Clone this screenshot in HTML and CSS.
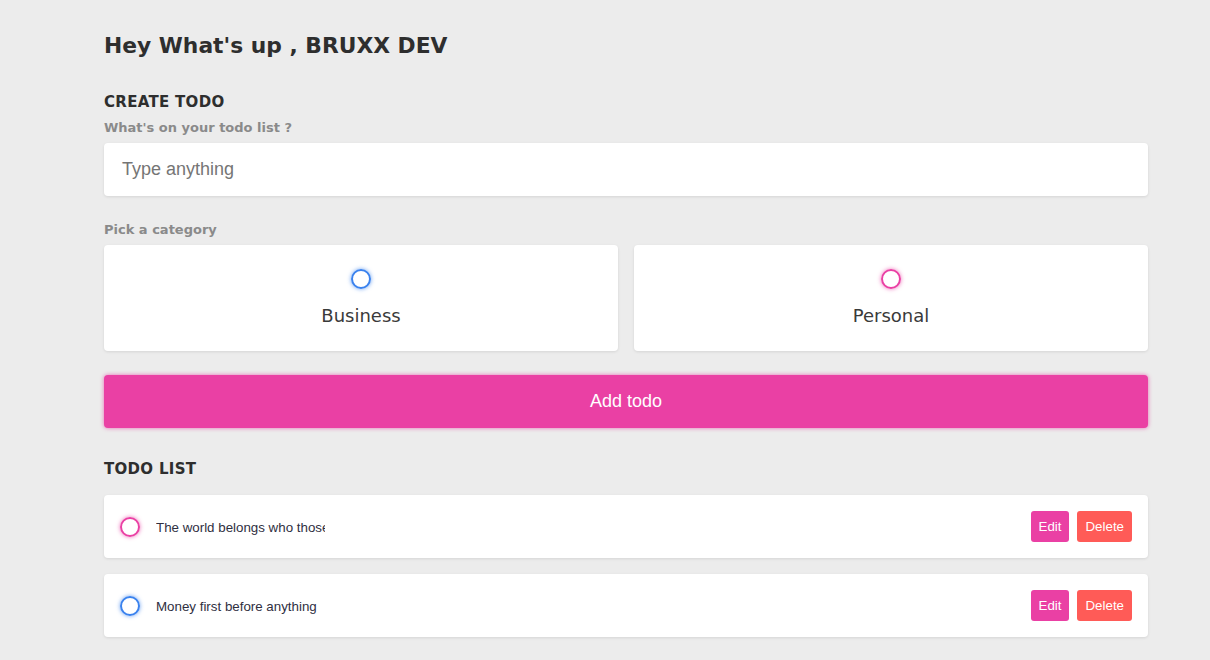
FILE: index.html
```html
<!DOCTYPE html>
<html lang="en">
<head>
<meta charset="utf-8">
<title>Todo</title>
<link rel="stylesheet" href="styles.css">
</head>
<body>
<main class="app">
  <section class="greeting">
    <h2 class="title">Hey What's up , <span class="name">BRUXX DEV</span></h2>
  </section>

  <section class="create-todo">
    <h3>CREATE TODO</h3>
    <h4>What's on your todo list ?</h4>
    <div class="text-input">Type anything</div>

    <h4>Pick a category</h4>
    <div class="options">
      <div class="option">
        <span class="bubble business"></span>
        <div class="option-label">Business</div>
      </div>
      <div class="option">
        <span class="bubble personal"></span>
        <div class="option-label">Personal</div>
      </div>
    </div>

    <div class="submit">Add todo</div>
  </section>

  <section class="todo-list">
    <h3>TODO LIST</h3>
    <div class="list">
      <div class="todo-item">
        <span class="bubble personal"></span>
        <div class="todo-content"><span class="todo-text">The world belongs who those who wake up early</span></div>
        <div class="actions">
          <span class="btn edit">Edit</span>
          <span class="btn delete">Delete</span>
        </div>
      </div>
      <div class="todo-item">
        <span class="bubble business"></span>
        <div class="todo-content"><span class="todo-text">Money first before anything</span></div>
        <div class="actions">
          <span class="btn edit">Edit</span>
          <span class="btn delete">Delete</span>
        </div>
      </div>
    </div>
  </section>
</main>
</body>
</html>
```

FILE: styles.css
```css
* {
  margin: 0;
  padding: 0;
  box-sizing: border-box;
}

body {
  background: #ececec;
  color: #333333;
  font-family: "DejaVu Sans", sans-serif;
}

.app {
  width: 1148px;
  padding: 32px 0 0 104px;
}

.title {
  font-size: 21.8px;
  line-height: 28px;
  font-weight: 700;
  color: #2e2e2e;
}

.create-todo {
  margin-top: 32px;
}

h3 {
  font-size: 15px;
  line-height: 20px;
  font-weight: 700;
  letter-spacing: 0.3px;
  color: #2e2e2e;
  margin-bottom: 6px;
}

h4 {
  font-size: 13px;
  line-height: 19px;
  font-weight: 700;
  color: #8a8a8a;
  margin-bottom: 6px;
}

.text-input {
  height: 53px;
  display: flex;
  align-items: center;
  padding: 0 18px;
  background: #fff;
  border-radius: 4px;
  box-shadow: 0 1px 3px rgba(0, 0, 0, 0.1);
  font-family: "Liberation Sans", Arial, sans-serif;
  font-size: 18px;
  color: #757575;
  margin-bottom: 24px;
}

.options {
  display: grid;
  grid-template-columns: 1fr 1fr;
  gap: 16px;
  margin-bottom: 24px;
}

.option {
  display: flex;
  flex-direction: column;
  align-items: center;
  padding: 24px;
  background: #fff;
  border-radius: 4px;
  box-shadow: 0 1px 3px rgba(0, 0, 0, 0.1);
}

.option-label {
  margin-top: 16px;
  font-size: 18px;
  line-height: 22px;
  font-weight: 400;
  color: #3a3a3a;
}

.bubble {
  display: block;
  flex: none;
  width: 20px;
  height: 20px;
  border-radius: 50%;
  border: 2px solid #3a82ee;
  box-shadow: 0 0 4px rgba(58, 130, 238, 0.75);
}

.bubble.personal {
  border-color: #ea40a4;
  box-shadow: 0 0 4px rgba(234, 64, 164, 0.75);
}

.submit {
  height: 53px;
  display: flex;
  align-items: center;
  justify-content: center;
  background: #ea40a4;
  border-radius: 4px;
  box-shadow: 0 0 4px rgba(234, 64, 164, 0.75);
  color: #fff;
  font-family: "Liberation Sans", Arial, sans-serif;
  font-size: 18px;
}

.todo-list {
  margin-top: 32px;
}

.todo-list h3 {
  line-height: 19px;
  margin-bottom: 16px;
}

.todo-item {
  display: flex;
  align-items: center;
  padding: 16px;
  background: #fff;
  border-radius: 4px;
  box-shadow: 0 1px 3px rgba(0, 0, 0, 0.1);
  margin-bottom: 16px;
}

.todo-item .bubble {
  margin-right: 16px;
}

.todo-content {
  flex: 1 1 0%;
}

.todo-text {
  display: block;
  width: 169px;
  padding-top: 1px;
  overflow: hidden;
  white-space: nowrap;
  font-family: "Liberation Sans", Arial, sans-serif;
  font-size: 13.333px;
  color: #2f2f3f;
}

.actions {
  display: flex;
  align-items: center;
  gap: 8px;
}

.btn {
  display: block;
  padding: 8px;
  border-radius: 3px;
  color: #fff;
  font-family: "Liberation Sans", Arial, sans-serif;
  font-size: 13.333px;
  line-height: 15px;
}

.edit {
  background: #ea40a4;
}

.delete {
  background: #ff5b57;
}
```
